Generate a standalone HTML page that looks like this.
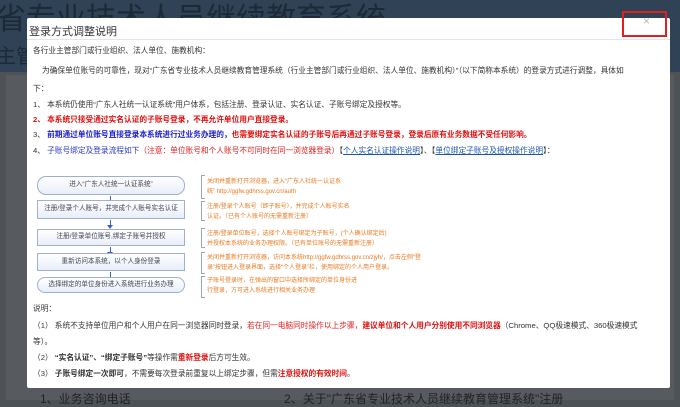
<!DOCTYPE html>
<html><head><meta charset="utf-8"><style>
*{margin:0;padding:0;box-sizing:border-box}
body{width:680px;height:400px;overflow:hidden;position:relative;background:#4d5257;font-family:"Liberation Sans","Noto Sans CJK SC",sans-serif}
.top{position:absolute;left:0;top:0;width:680px;height:72px;background:#2f4256}
.bgt{position:absolute;color:#1c2a38;font-size:30px;left:-4px;top:-6px;white-space:nowrap}
.bgt2{position:absolute;color:#1c2a38;font-size:20px;left:-4px;top:40px}
.panel{position:absolute;left:6px;top:75px;width:668px;height:325px;background:#575b60}
.bot{position:absolute;left:40px;top:390px;font-size:12px;color:#222;white-space:nowrap}
.modal{position:absolute;left:27px;top:18px;width:643px;height:370px;background:#fff;border-radius:2px}
.hd{height:22px;border-bottom:1px solid #e5e5e5;font-size:11px;color:#333;padding:5px 0 0 2px}
.close{position:absolute;left:622px;top:11px;width:45px;height:26px;border:2px solid #e02020}
.x{position:absolute;left:643px;top:14px;color:#bbb;font-size:12px}
.t{position:absolute;left:6px;font-size:7.7px;color:#333;white-space:nowrap}
.r{color:#e01010;font-weight:bold}
.b{color:#1a1ad0;font-weight:bold}
.bl{color:#2a3ac8}
.rn{color:#e02020}
.u{color:#1a56b0;text-decoration:underline}
.box{position:absolute;left:10px;width:148px;border:1.5px solid #9fb0cf;background:linear-gradient(#fff,#e8eef8);font-size:6.6px;color:#445;text-align:center;line-height:15px;white-space:nowrap;overflow:hidden}
.pill{border-radius:9px}
.arr{position:absolute;left:83px;width:1px;height:7px;background:#4060c0}
.arr:after{content:"";position:absolute;left:-3px;top:5px;border:3px solid transparent;border-top:4px solid #4060c0}
.br{position:absolute;left:174px;width:4px;border:1px solid #9aa;border-right:none}
.o{position:absolute;left:180px;font-size:6px;color:#e87a20;line-height:10px;white-space:nowrap}
</style></head><body>
<div class="top"></div>
<div class="bgt">省专业技术人员继续教育系统</div>
<div class="bgt2">主管</div>
<div class="panel"></div>
<div class="bot">1、业务咨询电话 &nbsp;&nbsp;&nbsp;&nbsp;&nbsp;&nbsp;&nbsp;&nbsp;&nbsp;&nbsp;&nbsp;&nbsp;&nbsp;&nbsp;&nbsp;&nbsp;&nbsp;&nbsp;&nbsp;&nbsp;&nbsp;&nbsp;&nbsp;&nbsp;&nbsp;&nbsp;&nbsp;&nbsp;&nbsp;&nbsp;&nbsp;&nbsp;&nbsp;&nbsp;&nbsp;&nbsp;&nbsp;&nbsp;&nbsp;&nbsp;&nbsp;&nbsp;&nbsp;&nbsp; 2、关于"广东省专业技术人员继续教育管理系统"注册</div>
<div class="modal">
<div class="hd">登录方式调整说明</div>
<div class="t" style="top:27px">各行业主管部门或行业组织、法人单位、施教机构：</div>
<div class="t" style="top:47px;left:15px">为确保单位账号的可靠性，现对“广东省专业技术人员继续教育管理系统（行业主管部门或行业组织、法人单位、施教机构）”（以下简称本系统）的登录方式进行调整，具体如</div>
<div class="t" style="top:65px">下：</div>
<div class="t" style="top:81px">1、 本系统仍使用“广东人社统一认证系统”用户体系，包括注册、登录认证、实名认证、子账号绑定及授权等。</div>
<div class="t r" style="top:96px">2、 本系统只接受通过实名认证的子账号登录，不再允许单位用户直接登录。</div>
<div class="t" style="top:111px">3、 <span class="b">前期通过单位账号直接登录本系统进行过业务办理的，</span><span class="r">也需要绑定实名认证的子账号后再通过子账号登录，登录后原有业务数据不受任何影响。</span></div>
<div class="t" style="top:127px">4、 <span class="bl">子账号绑定及登录流程如下</span><span class="rn">（注意：单位账号和个人账号不可同时在同一浏览器登录）</span>【<span class="u">个人实名认证操作说明</span>】、【<span class="u">单位绑定子账号及授权操作说明</span>】：</div>
<div class="box pill" style="top:158px;height:19px">进入“广东人社统一认证系统”</div>
<div class="arr" style="top:178px"></div>
<div class="box" style="top:182px;height:19px">注册/登录个人账号，并完成个人账号实名认证</div>
<div class="arr" style="top:202px"></div>
<div class="box" style="top:211px;height:17px;line-height:14px">注册/登录单位账号,绑定子账号并授权</div>
<div class="arr" style="top:229px"></div>
<div class="box" style="top:235px;height:18px">重新访问本系统，以个人身份登录</div>
<div class="arr" style="top:254px"></div>
<div class="box pill" style="top:259px;height:16px;line-height:13px">选择绑定的单位身份进入系统进行业务办理</div>
<div class="br" style="top:157px;height:24px"></div>
<div class="o" style="top:159px">关闭并重新打开浏览器，进入“广东人社统一认证系<br>统” http://ggfw.gdhrss.gov.cn/auth</div>
<div class="br" style="top:183px;height:20px"></div>
<div class="o" style="top:184px">注册/登录个人账号（即子账号），并完成个人账号实名<br>认证。（已有个人账号的无需重新注册）</div>
<div class="br" style="top:210px;height:20px"></div>
<div class="o" style="top:211px">注册/登录单位账号，选择个人账号绑定为子账号，(个人确认绑定后)<br>并授权本系统的业务办理权限。（已有单位账号的无需重新注册）</div>
<div class="br" style="top:234px;height:22px"></div>
<div class="o" style="top:235px">关闭并重新打开浏览器，访问本系统http://ggfw.gdhrss.gov.cn/zjyh/，点击左侧“登<br>录”按钮进入登录界面，选择“个人登录”栏，使用绑定的个人用户登录。</div>
<div class="br" style="top:258px;height:22px"></div>
<div class="o" style="top:258px">子账号登录时，在弹出的窗口中选择所绑定的单位身份进<br>行登录，方可进入系统进行相关业务办理</div>
<div class="t" style="top:285px">说明：</div>
<div class="t" style="top:302px">（1） 系统不支持单位用户和个人用户在同一浏览器同时登录，<span class="rn">若在同一电脑同时操作以上步骤，</span><span class="r">建议单位和个人用户分别使用不同浏览器</span>（Chrome、QQ极速模式、360极速模式</div>
<div class="t" style="top:318px">等）。</div>
<div class="t" style="top:334px">（2） <b>“实名认证”、“绑定子账号”</b>等操作需<span class="r">重新登录</span>后方可生效。</div>
<div class="t" style="top:350px">（3） <b>子账号绑定一次即可</b>，不需要每次登录前重复以上绑定步骤，但需<span class="r">注意授权的有效时间</span>。</div>
</div>
<div class="close"></div>
<div class="x">×</div>
</body></html>
